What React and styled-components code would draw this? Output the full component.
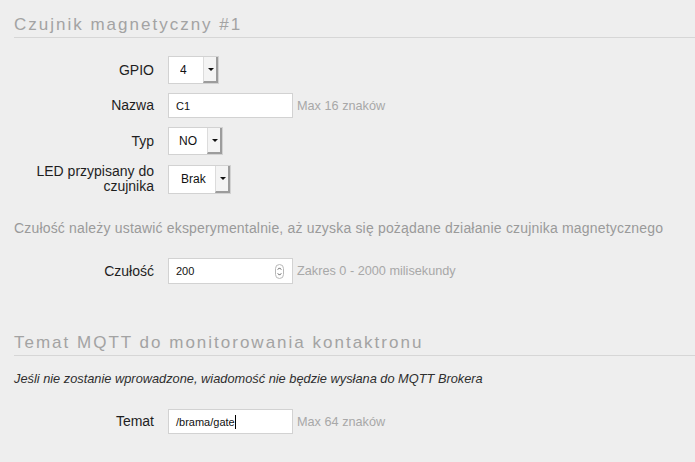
import React from "react";
import styled, { createGlobalStyle } from "styled-components";

const Global = createGlobalStyle`
  html, body { margin: 0; padding: 0; background: #eeeeee; }
  body { font-family: "Liberation Sans", Arial, Helvetica, sans-serif; color: #222; }
  * { box-sizing: border-box; }
`;

const Page = styled.div`
  width: 695px;
  height: 462px;
  overflow: hidden;
  padding: 15px 0 0 14px;
  background: #eeeeee;
`;

const SectionTitle = styled.h2`
  margin: ${(p) => p.$top || 0}px 0 0 0;
  padding: 0 0 2px 0;
  font-size: 17px;
  line-height: 20px;
  font-weight: normal;
  letter-spacing: 2px;
  color: #a3a3a3;
  border-bottom: 1px solid #d6d6d6;
`;

const Form = styled.div`
  display: flex;
  flex-direction: column;
  gap: 9px;
  margin-top: ${(p) => p.$top || 0}px;
`;

const Row = styled.div`
  display: grid;
  grid-template-columns: 140px auto;
  column-gap: 14px;
  align-items: center;
`;

const Label = styled.label`
  text-align: right;
  font-size: 14px;
  line-height: 15px;
  color: #1e1e1e;
`;

const Control = styled.div`
  display: flex;
  align-items: center;
  gap: 4px;
`;

const Hint = styled.span`
  font-size: 12.7px;
  color: #a8a8a8;
`;

const SelectBox = styled.div`
  display: inline-flex;
  height: ${(p) => p.$h || 28}px;
  width: ${(p) => p.$w}px;
  border: 1px solid #d2d2d2;
  background: #fff;
`;

const NativeSelect = styled.select`
  appearance: none;
  -webkit-appearance: none;
  border: none;
  outline: none;
  background: transparent;
  flex: 1;
  min-width: 0;
  padding: 0 0 0 ${(p) => p.$pad || 11}px;
  font-family: "Liberation Sans", Arial, sans-serif;
  font-size: 12px;
  color: #111;
`;

const ArrowBtn = styled.span`
  width: 15px;
  display: flex;
  align-items: center;
  justify-content: center;
  background: #f4f4f4;
  border-left: 1px solid #dcdcdc;
  border-right: 2px solid #9c9c9c;
  border-bottom: 2px solid #9c9c9c;
  &::after {
    content: "";
    width: 0;
    height: 0;
    border-left: 3px solid transparent;
    border-right: 3px solid transparent;
    border-top: 3px solid #111;
    margin-left: 1px;
  }
`;

const TextInput = styled.input`
  width: 125px;
  height: 25px;
  border: 1px solid #d2d2d2;
  background: #fff;
  outline: none;
  padding: 0 7px;
  font-family: "Liberation Sans", Arial, sans-serif;
  font-size: 11px;
  color: #111;
`;

const FieldShell = styled.div`
  display: flex;
  align-items: center;
  width: 125px;
  height: ${(p) => p.$h || 25}px;
  border: 1px solid #d2d2d2;
  background: #fff;
  padding: 0 6px 0 7px;
  font-size: 11px;
  color: #111;
`;

const BareInput = styled.input`
  flex: 1;
  min-width: 0;
  border: none;
  outline: none;
  background: transparent;
  padding: 0;
  font-family: "Liberation Sans", Arial, sans-serif;
  font-size: 11px;
  color: #111;
`;

const Caret = styled.span`
  display: inline-block;
  width: 1px;
  height: 14px;
  background: #000;
`;

const Spinner = styled.svg`
  flex: none;
  margin-right: 2px;
`;

const Note = styled.p`
  margin: ${(p) => p.$top || 0}px 0 0 0;
  line-height: 16px;
  color: ${(p) => (p.$italic ? "#2f2f2f" : "#9a9a9a")};
  font-style: ${(p) => (p.$italic ? "italic" : "normal")};
  font-size: ${(p) => (p.$italic ? 12.8 : 14)}px;
  letter-spacing: ${(p) => (p.$italic ? 0 : 0.18)}px;
`;

function Select({ width, height, value, options, pad }) {
  return (
    <SelectBox $w={width} $h={height}>
      <NativeSelect defaultValue={value} $pad={pad}>
        {options.map((o) => (
          <option key={o}>{o}</option>
        ))}
      </NativeSelect>
      <ArrowBtn />
    </SelectBox>
  );
}

export default function App() {
  return (
    <>
      <Global />
      <Page>
        <SectionTitle>Czujnik magnetyczny #1</SectionTitle>
        <Form $top={18}>
          <Row>
            <Label>GPIO</Label>
            <Control>
              <Select width={51} value="4" options={["4", "5", "12", "13", "14"]} />
            </Control>
          </Row>
          <Row>
            <Label>Nazwa</Label>
            <Control>
              <TextInput defaultValue="C1" />
              <Hint>Max 16 znaków</Hint>
            </Control>
          </Row>
          <Row>
            <Label>Typ</Label>
            <Control>
              <Select width={55} height={28} value="NO" options={["NO", "NC"]} pad={10} />
            </Control>
          </Row>
          <Row>
            <Label>
              LED przypisany do
              <br />
              czujnika
            </Label>
            <Control>
              <Select width={63} height={29} value="Brak" options={["Brak", "LED 1", "LED 2"]} pad={12} />
            </Control>
          </Row>
        </Form>

        <Note $top={26}>
          Czułość należy ustawić eksperymentalnie, aż uzyska się pożądane działanie czujnika magnetycznego
        </Note>

        <Form $top={22}>
          <Row>
            <Label>Czułość</Label>
            <Control>
              <FieldShell $h={26}>
                <BareInput defaultValue="200" />
                <Spinner width="9" height="15" viewBox="0 0 9 15">
                  <rect x="0.5" y="0.5" width="8" height="14" rx="4" fill="#fff" stroke="#b8b8b8" />
                  <path d="M2.8 5.6 L4.5 3.9 L6.2 5.6" fill="none" stroke="#555" strokeWidth="1" />
                  <path d="M2.8 9.4 L4.5 11.1 L6.2 9.4" fill="none" stroke="#555" strokeWidth="1" />
                </Spinner>
              </FieldShell>
              <Hint>Zakres 0 - 2000 milisekundy</Hint>
            </Control>
          </Row>
        </Form>

        <SectionTitle $top={49}>Temat MQTT do monitorowania kontaktronu</SectionTitle>

        <Note $italic $top={15}>
          Jeśli nie zostanie wprowadzone, wiadomość nie będzie wysłana do MQTT Brokera
        </Note>

        <Form $top={22}>
          <Row>
            <Label>Temat</Label>
            <Control>
              <FieldShell $h={25}>
                <span>/brama/gate</span>
                <Caret />
              </FieldShell>
              <Hint>Max 64 znaków</Hint>
            </Control>
          </Row>
        </Form>
      </Page>
    </>
  );
}
